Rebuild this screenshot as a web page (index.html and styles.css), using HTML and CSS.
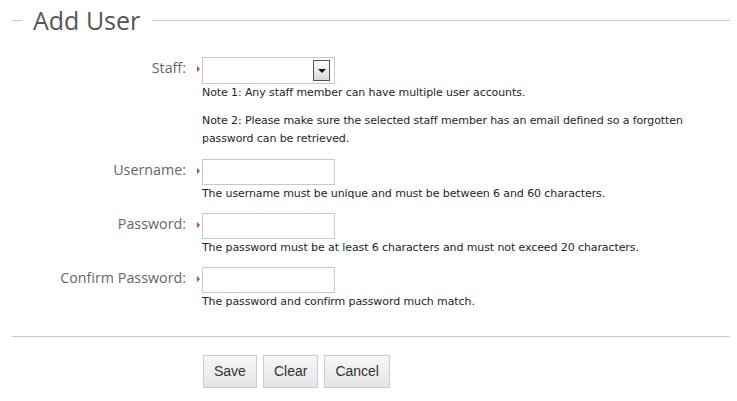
FILE: index.html
```html
<!DOCTYPE html>
<html>
<head>
<meta charset="utf-8">
<link rel="stylesheet" href="styles.css">
</head>
<body>
<div class="page">
  <div class="legend"><span class="legend-text">Add User</span></div>
  <div class="form">
    <div class="row">
      <label class="label">Staff:</label>
      <span class="req"></span>
      <div class="field">
        <div class="select"><span class="arrow"></span></div>
        <div class="help">Note 1: Any staff member can have multiple user accounts.</div>
        <div class="help note2">Note 2: Please make sure the selected staff member has an email defined so a forgotten password can be retrieved.</div>
      </div>
    </div>
    <div class="row">
      <label class="label">Username:</label>
      <span class="req"></span>
      <div class="field">
        <div class="input"></div>
        <div class="help">The username must be unique and must be between 6 and 60 characters.</div>
      </div>
    </div>
    <div class="row">
      <label class="label">Password:</label>
      <span class="req"></span>
      <div class="field">
        <div class="input"></div>
        <div class="help">The password must be at least 6 characters and must not exceed 20 characters.</div>
      </div>
    </div>
    <div class="row">
      <label class="label">Confirm Password:</label>
      <span class="req"></span>
      <div class="field">
        <div class="input"></div>
        <div class="help">The password and confirm password much match.</div>
      </div>
    </div>
  </div>
  <div class="divider"></div>
  <div class="buttons">
    <button class="btn">Save</button>
    <button class="btn">Clear</button>
    <button class="btn">Cancel</button>
  </div>
</div>
</body>
</html>
```
FILE: styles.css
```css
html, body {
  margin: 0;
  padding: 0;
  background: #fff;
}
.page {
  padding: 0 7px 0 12px;
}
.legend {
  margin-top: 5px;
  height: 30px;
  display: flex;
  align-items: center;
}
.legend::before {
  content: "";
  width: 10px;
  height: 1px;
  background: #c8c8c8;
}
.legend::after {
  content: "";
  flex: 1;
  height: 1px;
  background: #c8c8c8;
}
.legend-text {
  padding: 0 12px 0 11px;
  font-family: "Open Sans", sans-serif;
  font-size: 25px;
  line-height: 30px;
  color: #555;
}
.form {
  margin-top: 22px;
}
.row {
  display: grid;
  grid-template-columns: 174px 16px 1fr;
  margin-bottom: 10px;
}
.row:first-child {
  margin-bottom: 11px;
}
.label {
  text-align: right;
  font-family: "Open Sans", sans-serif;
  font-size: 14.3px;
  line-height: 22px;
  color: #666;
}
.req {
  position: relative;
}
.req::after {
  content: "";
  position: absolute;
  left: 11px;
  top: 9px;
  border-left: 3px solid #d43f3a;
  border-top: 3px solid transparent;
  border-bottom: 3px solid transparent;
}
.select {
  box-sizing: border-box;
  width: 133px;
  height: 27px;
  border: 1px solid #c8c8c8;
  background: #fff;
  display: flex;
  justify-content: flex-end;
  align-items: center;
  padding-right: 4px;
}
.arrow {
  box-sizing: border-box;
  width: 17px;
  height: 21px;
  border: 1px solid #555;
  background: linear-gradient(#ffffff, #d8d8d8);
  display: flex;
  align-items: center;
  justify-content: center;
}
.arrow::after {
  content: "";
  border-top: 4px solid #111;
  border-left: 4px solid transparent;
  border-right: 4px solid transparent;
}
.input {
  box-sizing: border-box;
  width: 133px;
  height: 26px;
  border: 1px solid #c8c8c8;
  background: #fff;
}
.help {
  font-family: "DejaVu Sans", sans-serif;
  font-size: 11px;
  letter-spacing: -0.1px;
  line-height: 18px;
  color: #1e1e2a;
  max-width: 500px;
}
.note2 {
  margin-top: 10px;
}
.divider {
  margin-top: 25px;
  height: 1px;
  background: #c8c8c8;
}
.buttons {
  margin-top: 18px;
  padding-left: 191px;
  display: flex;
  gap: 6px;
}
.btn {
  font-family: "Liberation Sans", Arial, sans-serif;
  font-size: 14px;
  line-height: 17px;
  color: #333;
  padding: 7px 10px;
  border: 1px solid #ccc;
  border-radius: 0;
  background: linear-gradient(#f7f7f7, #e4e4e4);
  margin: 0;
}
```
